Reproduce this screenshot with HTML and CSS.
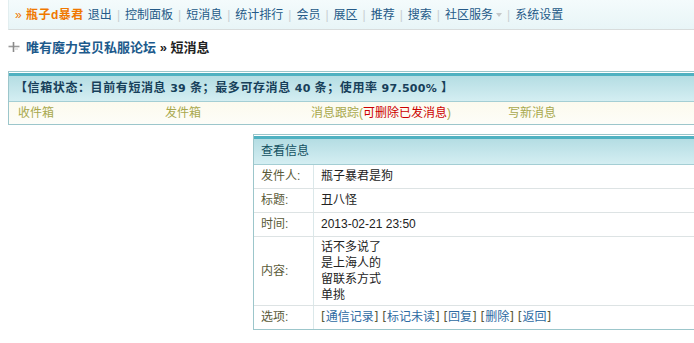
FILE: index.html
```html
<!DOCTYPE html>
<html lang="zh-CN">
<head>
    <meta charset="UTF-8">
    <title>短消息 - 唯有魔力宝贝私服论坛</title>
    <link rel="stylesheet" href="styles.css">
</head>
<body>
<div class="page">
    <div class="topnav">
        <span class="user"><span class="raquo">»</span> 瓶子d暴君</span>
        <a href="#">退出</a><span class="sep">|</span>
        <a href="#">控制面板</a><span class="sep">|</span>
        <a href="#">短消息</a><span class="sep">|</span>
        <a href="#">统计排行</a><span class="sep">|</span>
        <a href="#">会员</a><span class="sep">|</span>
        <a href="#">展区</a><span class="sep">|</span>
        <a href="#">推荐</a><span class="sep">|</span>
        <a href="#">搜索</a><span class="sep">|</span>
        <a href="#" class="dropdown">社区服务<i class="caret"></i></a><span class="sep">|</span>
        <a href="#">系统设置</a>
    </div>

    <div class="crumb">
        <svg class="crumb-icon" width="12" height="12" viewBox="0 0 12 12">
            <path d="M0.5 5.5h11" stroke="#9a9a9a" stroke-width="1.6"/>
            <path d="M5.5 1v10" stroke="#8a8a8a" stroke-width="1.6"/>
            <path d="M7 8h3" stroke="#c8c8c8" stroke-width="1"/>
        </svg><a href="#">唯有魔力宝贝私服论坛</a> <span class="here">» 短消息</span>
    </div>

    <div class="box status">
        <div class="box-head">【信箱状态：目前有短消息 <span class="num">39</span> 条；最多可存消息 <span class="num">40</span> 条；使用率 <span class="num">97.500%</span> 】</div>
        <div class="tabs">
            <a href="#">收件箱</a>
            <a href="#">发件箱</a>
            <a href="#">消息跟踪(<span class="red">可删除已发消息</span>)</a>
            <a href="#">写新消息</a>
        </div>
    </div>

    <div class="box msg">
        <div class="box-head">查看信息</div>
        <div class="msg-row">
            <div class="label">发件人:</div>
            <div class="value">瓶子暴君是狗</div>
        </div>
        <div class="msg-row">
            <div class="label">标题:</div>
            <div class="value">丑八怪</div>
        </div>
        <div class="msg-row">
            <div class="label">时间:</div>
            <div class="value">2013-02-21 23:50</div>
        </div>
        <div class="msg-row tall">
            <div class="label">内容:</div>
            <div class="value">话不多说了<br>是上海人的<br>留联系方式<br>单挑</div>
        </div>
        <div class="msg-row last">
            <div class="label">选项:</div>
            <div class="value options">
                [<a href="#">通信记录</a>] [<a href="#">标记未读</a>] [<a href="#">回复</a>] [<a href="#">删除</a>] [<a href="#">返回</a>]
            </div>
        </div>
    </div>
</div>
</body>
</html>
```

FILE: styles.css
```css
html {
    overflow: hidden;
}

body {
    margin: 0;
    background: #fff;
    font-family: "Liberation Sans", "Noto Sans CJK SC", sans-serif;
    font-size: 12px;
    color: #222;
}

a {
    text-decoration: none;
}

.page {
    width: 1000px;
    padding-left: 8px;
}

/* top navigation */
.topnav {
    display: flex;
    align-items: center;
    height: 29px;
    padding-left: 6px;
    border-left: 1px solid #e2eef0;
    border-bottom: 1px solid #d8dcdc;
    background: linear-gradient(#f4fbfc, #e8f5f7);
    line-height: 16px;
}

.topnav a {
    color: #245a88;
}

.user {
    color: #f07800;
    font-weight: bold;
    letter-spacing: 0.5px;
    margin-right: 4px;
}

.raquo {
    font-weight: normal;
}

.sep {
    color: #c8cfd2;
    margin: 0 5px;
}

.dropdown {
    display: flex;
    align-items: center;
}

.caret {
    display: inline-block;
    margin-left: 3px;
    border-left: 3px solid transparent;
    border-right: 3px solid transparent;
    border-top: 4px solid #c4c8ca;
}

/* breadcrumb */
.crumb {
    margin-top: 10px;
    height: 16px;
    line-height: 16px;
    font-size: 13px;
    font-weight: bold;
    color: #222;
}

.crumb-icon {
    vertical-align: -1px;
    margin-right: 6px;
}

.crumb a {
    color: #1d5a8c;
}

/* boxes */
.box {
    border: 1px solid #9cc6cb;
    padding-top: 1px;
}

.box-head {
    height: 25px;
    line-height: 25px;
    border-top: 3px solid #4fb1c1;
    border-bottom: 1px solid #a4ced4;
    background: linear-gradient(#b4dde3, #d4eef2);
    color: #11505f;
}

.status {
    margin-top: 15px;
}

.status .box-head {
    padding-left: 6px;
    font-weight: bold;
    letter-spacing: 0.6px;
    color: #173f5a;
}

.num {
    font-family: "DejaVu Sans", sans-serif;
    font-size: 11px;
    letter-spacing: 0.3px;
}

.tabs {
    display: grid;
    grid-template-columns: 147px 146px 197px 1fr;
    height: 22px;
    line-height: 22px;
    padding-left: 9px;
    background: linear-gradient(#fcfaee, #fdfdf8);
}

.tabs a {
    color: #a8a84c;
}

.red {
    color: #cc0000;
}

/* message view */
.msg {
    margin-top: 9px;
    margin-left: 245px;
    width: 600px;
}

.msg .box-head {
    padding-left: 7px;
}

.msg-row {
    display: grid;
    grid-template-columns: 60px 1fr;
    border-bottom: 1px solid #dde3e4;
}

.msg-row.last {
    border-bottom: none;
}

.label {
    border-right: 1px solid #dbe8ea;
    padding-left: 7px;
    line-height: 23px;
    color: #5a5a38;
}

.value {
    padding-left: 7px;
    line-height: 23px;
    color: #222;
}

.tall .label {
    display: flex;
    align-items: center;
    height: 68px;
}

.tall .value {
    line-height: 16px;
    padding-top: 2px;
    height: 66px;
}

.options {
    font-family: "DejaVu Sans", "Noto Sans CJK SC", sans-serif;
    color: #5a5a38;
}

.options a {
    font-family: "Liberation Sans", "Noto Sans CJK SC", sans-serif;
    color: #2d6aa2;
}
```
